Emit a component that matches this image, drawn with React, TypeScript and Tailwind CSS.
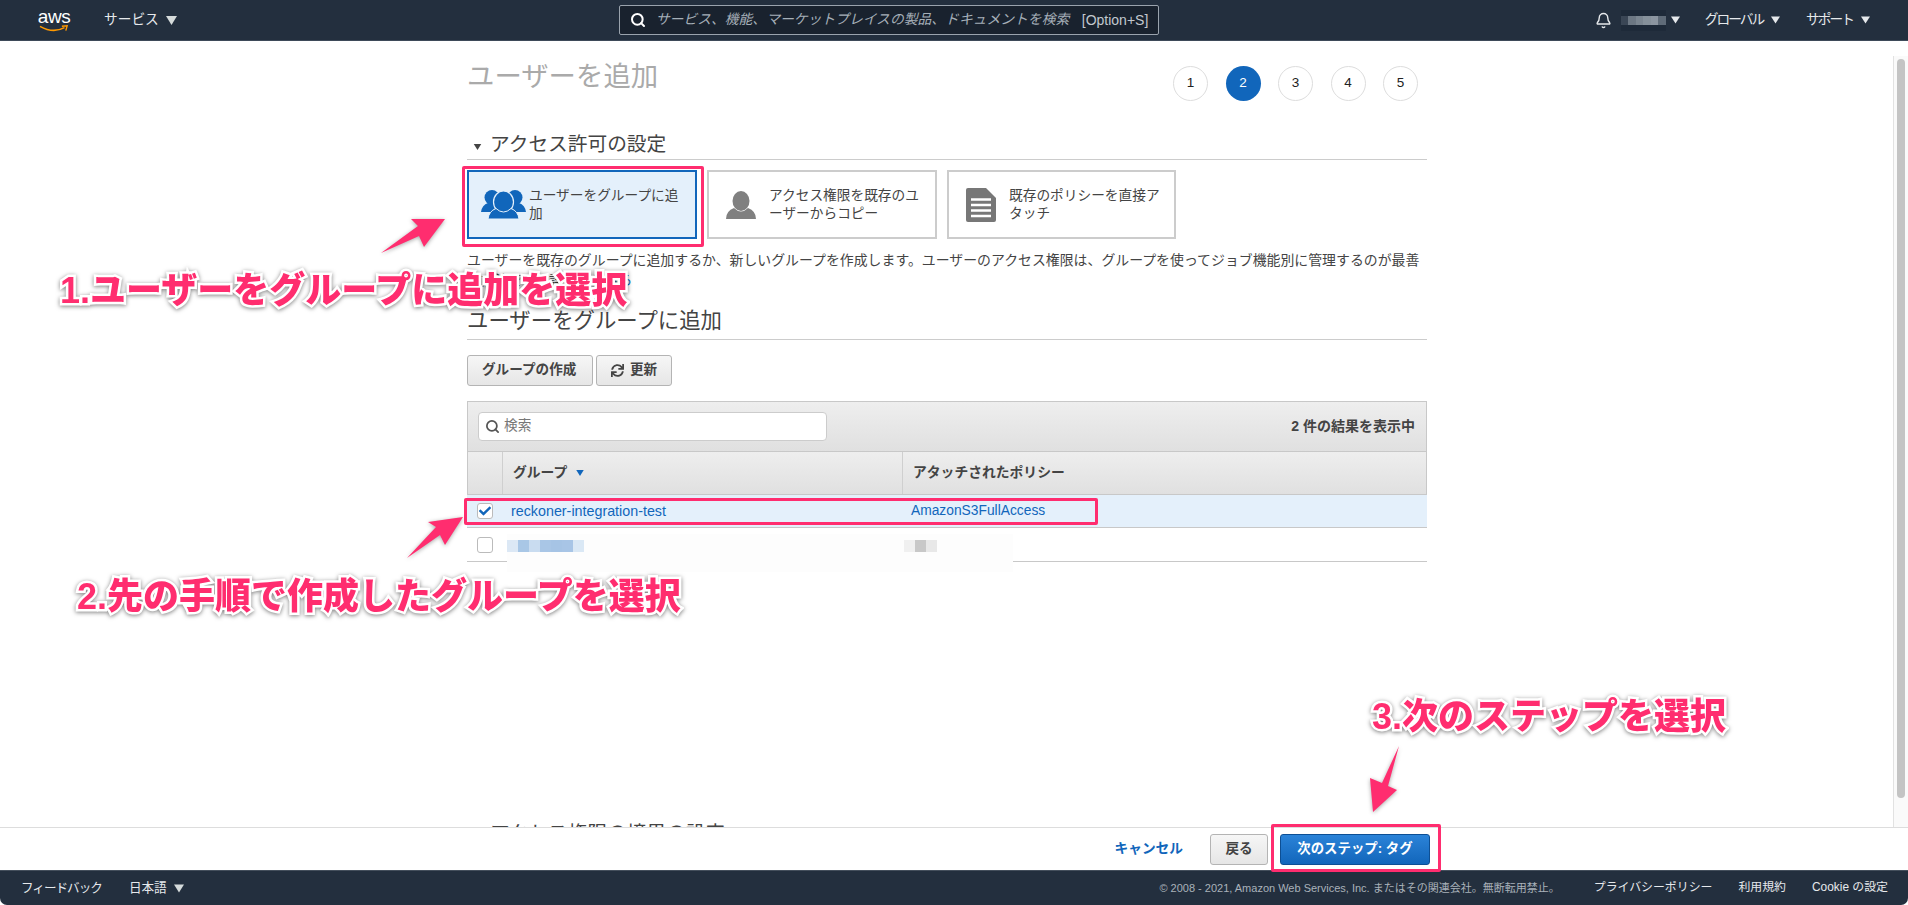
import { Bell, Search } from "lucide-react";
import { FaCheck, FaSync } from "react-icons/fa";

function Tri({ className }: { className?: string }) {
  return (
    <svg viewBox="0 0 10 8" className={className}>
      <polygon points="0,0 10,0 5,8" fill="currentColor" />
    </svg>
  );
}

function AwsLogo() {
  return (
    <div className="flex flex-col items-center w-[34px] h-[24px]">
      <span className="text-[19px] leading-[17px] text-white tracking-[-0.5px]">aws</span>
      <svg viewBox="0 0 34 8" className="w-[34px] h-[8px]">
        <path d="M1 1.5 Q16 10 29 3" fill="none" stroke="#f90" strokeWidth="1.8" />
        <path d="M26 1.5 L32 1 L30.5 6.5" fill="none" stroke="#f90" strokeWidth="1.6" />
      </svg>
    </div>
  );
}

function GroupIcon() {
  return (
    <svg viewBox="0 0 45 29" className="w-[45px] h-[29px] shrink-0">
      <ellipse cx="11" cy="7.5" rx="7.5" ry="7.5" fill="#1166bb" />
      <ellipse cx="34" cy="7.5" rx="7.5" ry="7.5" fill="#1166bb" />
      <path d="M0 22 Q1 15 7 13 L16 14 L13 22 Z" fill="#1166bb" />
      <path d="M45 22 Q44 15 38 13 L29 14 L32 22 Z" fill="#1166bb" />
      <ellipse cx="22.5" cy="12" rx="10" ry="11" fill="#1166bb" stroke="#e4f0fb" strokeWidth="1.2" />
      <path d="M7 29 Q8 21 15 18.5 Q22.5 25.5 30 18.5 Q37 21 38 29 Z" fill="#1166bb" stroke="#e4f0fb" strokeWidth="1" />
    </svg>
  );
}

function PersonIcon() {
  return (
    <svg viewBox="0 0 30 28" className="w-[30px] h-[28px] shrink-0">
      <ellipse cx="15" cy="10" rx="8.5" ry="10" fill="#808080" />
      <path d="M0 28 Q0 20 8 17 Q15 24 22 17 Q30 20 30 28 Z" fill="#808080" />
    </svg>
  );
}

function DocIcon() {
  return (
    <svg viewBox="0 0 30 34" className="w-[30px] h-[34px] shrink-0">
      <path d="M2 0 H20 L30 10 V32 Q30 34 28 34 H2 Q0 34 0 32 V2 Q0 0 2 0 Z" fill="#777" />
      <path d="M5 11.5 H25 M5 17 H25 M5 22.5 H25 M5 28 H25" stroke="#fff" strokeWidth="2.4" />
    </svg>
  );
}

// ぼかされた部分（ユーザー名など）
const headerMosaic = ["bg-[#3a4655]", "bg-[#6c7783]", "bg-[#7a8590]", "bg-[#85909a]", "bg-[#8b95a0]", "bg-[#5f6b78]"];
const nameMosaic = ["bg-[#dce8f5]", "bg-[#a9c7e6]", "bg-[#c9dcf0]", "bg-[#a9c6e6]", "bg-[#a6c4e5]", "bg-[#a8c5e6]", "bg-[#dae8f5]"];
const policyMosaic = ["bg-[#f0f0f0]", "bg-[#c8c8c8]", "bg-[#e8e8e8]"];

function Header() {
  return (
    <header className="h-[41px] shrink-0 bg-[#232f3e] border-b border-[#3e4a59] flex items-center pl-[37px] text-[13.7px] text-[#e6e9ec]">
      <AwsLogo />
      <span className="ml-[33px]">サービス</span>
      <Tri className="ml-[7px] w-[11px] h-[9px] text-[#d5dbdb]" />
      <div className="ml-[442px] w-[540px] h-[30px] bg-[#19222e] border border-[#9aa3ad] rounded-[2px] flex items-center pl-[10px]">
        <Search className="w-[16px] h-[16px] text-white" strokeWidth={3} />
        <span className="ml-[10px] w-[416px] overflow-hidden whitespace-nowrap italic text-[13.8px] text-[#a5afb8]">
          サービス、機能、マーケットプレイスの製品、ドキュメントを検索
        </span>
        <span className="ml-[10px] text-[14px] text-[#c2c8ce] whitespace-nowrap">[Option+S]</span>
      </div>
      <Bell className="ml-[436px] w-[17px] h-[17px] text-[#e6e9ec]" strokeWidth={2} />
      <div className="ml-[9px] w-[45px] h-[21px] bg-[#1e2a39] flex items-center">
        {headerMosaic.map((c) => (
          <div key={c} className={`w-[7.5px] h-[9px] ${c}`} />
        ))}
      </div>
      <Tri className="ml-[5px] w-[9px] h-[8px] text-[#e6e9ec]" />
      <span className="ml-[25px] whitespace-nowrap tracking-[-2px]">グローバル</span>
      <Tri className="ml-[8px] w-[9px] h-[8px] text-[#e6e9ec]" />
      <span className="ml-[26px] whitespace-nowrap tracking-[-2px]">サポート</span>
      <Tri className="ml-[8px] w-[9px] h-[8px] text-[#e6e9ec]" />
    </header>
  );
}

function Steps() {
  return (
    <div className="flex gap-[17.5px] pr-[9px]">
      {[1, 2, 3, 4, 5].map((n) => (
        <div
          key={n}
          className={
            n === 2
              ? "w-[35px] h-[35px] rounded-full bg-[#1166bb] text-white flex items-center justify-center text-[13.5px]"
              : "w-[35px] h-[35px] rounded-full border border-[#ddd] text-[#222] flex items-center justify-center text-[13.5px]"
          }
        >
          {n}
        </div>
      ))}
    </div>
  );
}

function Cards() {
  return (
    <div className="mt-[10px] flex gap-[10px] text-[13.7px] leading-[17.5px] text-[#444] whitespace-nowrap">
      <div className="w-[230px] h-[69px] border-2 border-[#1166bb] bg-[#e4f0fb] flex items-center pl-[12px] gap-[3px]">
        <GroupIcon />
        <span>
          ユーザーをグループに追
          <br />加
        </span>
      </div>
      <div className="w-[230px] h-[69px] border-2 border-[#ccc] flex items-center pl-[17px] gap-[13px]">
        <PersonIcon />
        <span>
          アクセス権限を既存のユ
          <br />
          ーザーからコピー
        </span>
      </div>
      <div className="w-[229px] h-[69px] border-2 border-[#ccc] flex items-center pl-[17px] gap-[13px]">
        <DocIcon />
        <span>
          既存のポリシーを直接ア
          <br />
          タッチ
        </span>
      </div>
    </div>
  );
}

function ToolButton({ children }: { children: React.ReactNode }) {
  return (
    <button className="h-[31px] px-[14px] flex items-center gap-[6px] rounded-[3px] border border-[#b4b4b4] bg-gradient-to-b from-[#f6f6f6] to-[#e6e6e6] text-[13.6px] font-bold text-[#444] whitespace-nowrap">
      {children}
    </button>
  );
}

function GroupTable() {
  return (
    <div className="mt-[15px] text-[14px]">
      <div className="h-[51px] border border-[#c8c8c8] bg-gradient-to-b from-[#eeeeee] to-[#e0e0e0] flex items-center justify-between pl-[10px] pr-[11px]">
        <div className="w-[349px] h-[29px] bg-white border border-[#ccc] rounded-[4px] flex items-center pl-[6px] gap-[4px] text-[13.7px] text-[#777]">
          <Search className="w-[15px] h-[15px] text-[#555]" strokeWidth={2.8} />
          検索
        </div>
        <span className="font-bold text-[14px] text-[#444]">2 件の結果を表示中</span>
      </div>
      <div className="h-[43px] border-x border-b border-[#c8c8c8] bg-gradient-to-b from-[#eeeeee] to-[#e0e0e0] flex font-bold text-[13.8px] text-[#444]">
        <div className="w-[35px] border-r border-[#cfcfcf]" />
        <div className="w-[400px] border-r border-[#cfcfcf] flex items-center pl-[10px] gap-[8px]">
          グループ
          <Tri className="w-[10px] h-[6px] text-[#1166bb]" />
        </div>
        <div className="flex items-center pl-[10px]">アタッチされたポリシー</div>
      </div>
      <div className="h-[33px] border-b border-[#c8c8c8] bg-[#e4f0fb] flex items-center text-[#1166bb]">
        <div className="w-[44px] pl-[10px]">
          <div className="w-[16px] h-[16px] rounded-[3px] border border-[#bbb] bg-white flex items-center justify-center">
            <FaCheck className="w-[12px] h-[12px] text-[#1166bb]" />
          </div>
        </div>
        <span className="w-[400px] pt-[1px] text-[14.3px]">reckoner-integration-test</span>
        <span className="pt-[1px] text-[13.8px]">AmazonS3FullAccess</span>
      </div>
      <div className="relative h-[34px] border-b border-[#c8c8c8] flex items-center">
        <div className="pl-[10px]">
          <div className="w-[16px] h-[16px] rounded-[3px] border border-[#bbb] bg-white" />
        </div>
        <div className="absolute left-[40px] top-[6px] w-[506px] h-[38px] bg-[#fdfdfd]" />
        <div className="absolute left-[40px] top-[12px] flex">
          {nameMosaic.map((c, i) => (
            <div key={i} className={`w-[11px] h-[12px] ${c}`} />
          ))}
        </div>
        <div className="absolute left-[437px] top-[12px] flex">
          {policyMosaic.map((c) => (
            <div key={c} className={`w-[11px] h-[12px] ${c}`} />
          ))}
        </div>
      </div>
    </div>
  );
}

function Annotations() {
  const label =
    "absolute whitespace-nowrap font-black text-[36px] leading-[40px] text-[#ff2d6f] [-webkit-text-stroke:5px_#fff] [paint-order:stroke_fill] drop-shadow-[0_1px_2px_rgba(0,0,0,0.5)]";
  return (
    <>
      <div className="absolute left-[462px] top-[166px] w-[242px] h-[81px] border-[3px] border-[#ff2d6f] rounded-[2px]" />
      <div className="absolute left-[464px] top-[498px] w-[634px] h-[27px] border-[3px] border-[#ff2d6f] rounded-[2px]" />
      <div className="absolute left-[1271px] top-[824px] w-[170px] h-[48px] border-[3px] border-[#ff2d6f] rounded-[2px]" />
      <svg viewBox="0 0 1908 905" className="absolute inset-0 w-[1908px] h-[905px] pointer-events-none drop-shadow-[0_1px_2px_rgba(0,0,0,0.35)]">
        <polygon points="381,253 418,226 411,219 445,219 424,247 419,236" fill="#ff2d6f" />
        <polygon points="407,558 436,527 428,522 463,517 445,545 440,535" fill="#ff2d6f" />
        <polygon points="1399,746 1382,783 1370,778 1373,812 1397,790 1388,786" fill="#ff2d6f" />
      </svg>
      <div className={`${label} left-[60px] top-[271px]`}>1.ユーザーをグループに追加を選択</div>
      <div className={`${label} left-[77px] top-[577px]`}>2.先の手順で作成したグループを選択</div>
      <div className={`${label} left-[1372px] top-[697px]`}>3.次のステップを選択</div>
    </>
  );
}

export default function App() {
  return (
    <div className="relative w-[1908px] h-[905px] flex flex-col overflow-hidden bg-white [font-family:'Liberation_Sans','Noto_Sans_CJK_JP',sans-serif]">
      <Header />
      <main className="relative flex-1 overflow-hidden">
        <div className="ml-[467px] w-[960px] text-[#444]">
          <div className="pt-[25px] flex justify-between items-start">
            <h1 className="text-[27.4px] leading-[22px] text-[#aaa]">ユーザーを追加</h1>
            <Steps />
          </div>
          <div className="mt-[29px] h-[30px] border-b border-[#ccc] flex items-center pl-[5px] gap-[7px]">
            <Tri className="mt-[4px] w-[11px] h-[6px] text-[#444]" />
            <h2 className="-mt-[2px] text-[19.7px] leading-[28px]">アクセス許可の設定</h2>
          </div>
          <Cards />
          <p className="mt-[11px] text-[13.9px] leading-[20px] whitespace-nowrap">
            ユーザーを既存のグループに追加するか、新しいグループを作成します。ユーザーのアクセス権限は、グループを使ってジョブ機能別に管理するのが最善
            <br />
            の方法です。詳細は<span className="text-[#1166bb]">こちら</span>
          </p>
          <h2 className="mt-[10px] h-[40px] border-b border-[#ccc] text-[21.4px] leading-[42px]">ユーザーをグループに追加</h2>
          <div className="mt-[15px] flex gap-[3px]">
            <div className="flex [&>button]:w-[126px]">
              <ToolButton>グループの作成</ToolButton>
            </div>
            <ToolButton>
              <FaSync className="w-[13px] h-[13px]" />
              更新
            </ToolButton>
          </div>
          <GroupTable />
          <div className="mt-[257px] flex items-center pl-[5px] gap-[7px]">
            <Tri className="mt-[4px] w-[11px] h-[6px] text-[#444]" />
            <h2 className="text-[19.7px] leading-[28px]">アクセス権限の境界の設定</h2>
          </div>
        </div>
        <div className="absolute right-0 top-[15px] bottom-0 w-[15px] border-l border-[#e2e2e2] bg-[#fafafa] pt-[3px] pl-[3px]">
          <div className="w-[8px] h-[739px] rounded-full bg-[#c4c4c4]" />
        </div>
      </main>
      <div className="h-[43px] shrink-0 border-t border-[#ddd] flex items-center justify-end pr-[478px]">
        <span className="font-bold text-[13.7px] text-[#1166bb] whitespace-nowrap">キャンセル</span>
        <button className="ml-[27px] w-[58px] h-[31px] rounded-[3px] border border-[#b4b4b4] bg-gradient-to-b from-[#f6f6f6] to-[#e6e6e6] text-[13.6px] text-[#444] font-bold">
          戻る
        </button>
        <button className="ml-[12px] w-[150px] h-[31px] rounded-[3px] border border-[#0d4f94] bg-gradient-to-b from-[#2b83d8] to-[#1166bb] text-[13.4px] font-bold text-white whitespace-nowrap">
          次のステップ: タグ
        </button>
      </div>
      <footer className="h-[35px] shrink-0 bg-[#232f3e] border-t border-[#444f5c] rounded-b-[7px] flex items-center pl-[21px] pr-[20px] text-[12.6px] text-[#e6e9ec] whitespace-nowrap">
        <span className="tracking-[-1px]">フィードバック</span>
        <span className="ml-[27px]">日本語</span>
        <Tri className="ml-[7px] w-[10px] h-[9px] text-[#d5dbdb]" />
        <span className="ml-auto text-[11px] text-[#aab2ba]">© 2008 - 2021, Amazon Web Services, Inc. またはその関連会社。無断転用禁止。</span>
        <span className="ml-[34px] text-[11.9px]">プライバシーポリシー</span>
        <span className="ml-[26px] text-[11.9px]">利用規約</span>
        <span className="ml-[26px] text-[11.9px]">Cookie の設定</span>
      </footer>
      <Annotations />
    </div>
  );
}
